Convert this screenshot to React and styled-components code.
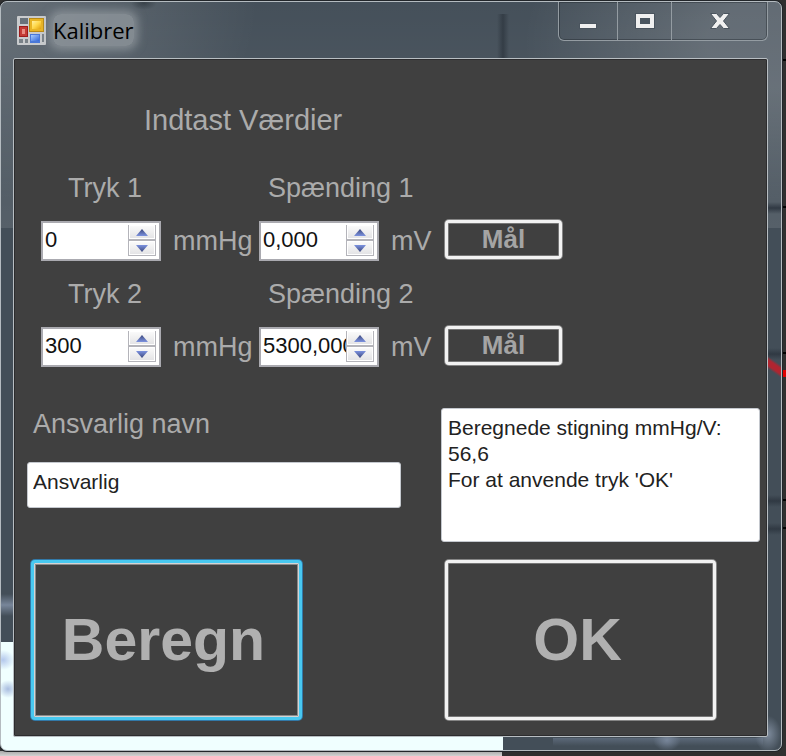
import React, { useState } from "react";
import styled, { createGlobalStyle, css } from "styled-components";

const GlobalStyle = createGlobalStyle`
  * { box-sizing: border-box; }
  body {
    margin: 0;
    min-height: 100vh;
    font-family: "Liberation Sans", Arial, sans-serif;
    background:
      linear-gradient(#a8a8a8, #d2d2d2) 0 751px / 502px 5px no-repeat,
      linear-gradient(#e00000, #e00000) 100% 370px / 4px 7px no-repeat,
      linear-gradient(#000, #000) 100% 59px / 5px 2px no-repeat,
      linear-gradient(#000, #000) 100% 206px / 5px 2px no-repeat,
      linear-gradient(#000, #000) 100% 352px / 5px 2px no-repeat,
      linear-gradient(#000, #000) 100% 499px / 5px 2px no-repeat,
      linear-gradient(#000, #000) 100% 527px / 5px 2px no-repeat,
      #303030;
  }
  button, input, textarea { font-family: inherit; }
`;

const shade = (y) =>
  `linear-gradient(transparent, #303943, transparent) 100% ${y}px / 13px 12px no-repeat`;

const GlassWindow = styled.div`
  margin: 1px 4px 0 0;
  padding: 0 13px 13px 12px;
  border: 1px solid #b4bbc0;
  border-radius: 7px;
  box-shadow: 0 0 0 1px #22262a;
  background:
    linear-gradient(transparent, #78869a, transparent) -4px 592px / 17px 22px no-repeat,
    radial-gradient(ellipse at center, #b4c8ec 0%, transparent 70%) -10px 648px / 24px 20px no-repeat,
    radial-gradient(ellipse at center, #a9bde0 0%, transparent 70%) -3px 678px / 20px 18px no-repeat,
    linear-gradient(215deg, transparent 32%, #b02530 42%, #b02530 58%, transparent 68%) 100% 352px / 13px 26px no-repeat,
    ${shade(200)}, ${shade(346)}, ${shade(493)}, ${shade(521)},
    radial-gradient(ellipse at center, #7e8b9c 0%, transparent 72%) 100% 714px / 26px 36px no-repeat,
    radial-gradient(ellipse at center, #78869a 0%, transparent 70%) 652px 727px / 28px 22px no-repeat,
    linear-gradient(#5c6979, transparent) 552px 736px / 210px 8px no-repeat,
    linear-gradient(#f0ffff, #f0ffff) 0 640px / 502px 110px no-repeat,
    linear-gradient(90deg, transparent, #343d46, transparent) 496px 12px / 12px 46px no-repeat,
    radial-gradient(ellipse at center, #39424a 0%, transparent 70%) 130px -6px / 26px 14px no-repeat,
    linear-gradient(rgba(255,255,255,.01), rgba(255,255,255,.1)) 0 0 / 100% 226px no-repeat,
    radial-gradient(ellipse at 0 0, rgba(255,255,255,.18), transparent 70%) 0 0 / 260px 200px no-repeat,
    radial-gradient(ellipse at 100% 20%, rgba(255,255,255,.16) 20%, transparent 70%) 100% 0 / 260px 200px no-repeat,
    #434e58;
`;

const TitleBar = styled.header`
  display: flex;
  justify-content: space-between;
  align-items: flex-start;
  height: 56px;
`;

const Title = styled.div`
  display: flex;
  align-items: center;
  gap: 7px;
  padding: 12px 0 0 4px;
`;

const TitleText = styled.h1`
  margin: 0;
  color: #000;
  font: 400 22px/32px "Open Sans", "Noto Sans", sans-serif;
  background: rgba(150, 156, 163, .7);
  box-shadow: 0 0 8px 4px rgba(150, 156, 163, .7);
  border-radius: 8px;
`;

const CaptionButtons = styled.div`
  display: flex;
  height: 39px;
  border: 1px solid #949ca2;
  border-top: 0;
  border-radius: 0 0 6px 6px;
  box-shadow: inset 0 0 0 1px rgba(20, 26, 32, .35);
`;

const captionWidths = { min: "58px", max: "54px", close: "96px" };

const CaptionButton = styled.button`
  display: grid;
  place-items: center;
  width: ${({ $kind }) => captionWidths[$kind]};
  padding: 0;
  border: 0;
  border-left: ${({ $kind }) => ($kind === "min" ? "0" : "1px solid #949ca2")};
  background: transparent;
`;

const Form = styled.main`
  padding: 41px 7px 16px 13px;
  border: 1px solid #b8bec2;
  border-radius: 2px;
  background: #404040;
  box-shadow: inset 0 0 0 1px #2c2c2e;
  color: #ababab;
`;

const Heading = styled.h2`
  margin: 0 0 32px 117px;
  font-size: 29px;
  font-weight: 400;
  line-height: 40px;
`;

const Readings = styled.div`
  display: grid;
  grid-template-columns: 218px 184px 119px;
  margin: 0 0 0 14px;
`;

const Label = styled.label`
  font-size: 27px;
  line-height: 32px;
  white-space: nowrap;
`;

const PressureLabel = styled(Label)`
  padding: 0 0 0 27px;
`;

const VoltageLabel = styled(Label)`
  grid-column: span 2;
  padding: 0 0 0 9px;
`;

const Reading = styled.div`
  display: flex;
  align-items: center;
  gap: 12px;
  height: 40px;
  margin: 17px 0;
`;

const Unit = styled.span`
  font-size: 27px;
  line-height: 32px;
`;

const NumberBox = styled.div`
  display: flex;
  width: 120px;
  height: 40px;
  padding: 2px 3px 3px 2px;
  border: 2px solid #aaaab0;
  background: #fff;
`;

const NumberInput = styled.input`
  flex: 1;
  min-width: 0;
  height: 30px;
  padding: 0;
  border: 0;
  outline: 0;
  background: transparent;
  color: #111;
  font-size: 22px;
`;

const Spinner = styled.div`
  display: grid;
  grid-template-rows: 1fr 1fr;
  gap: 2px;
  width: 28px;
  border: 1px solid #b4b4ba;
  border-top: 0;
  background: #b4b4ba;
`;

const SpinButton = styled.button`
  display: grid;
  place-items: center;
  padding: 0;
  border: 1px solid #fff;
  background: linear-gradient(#fafafa, #e4e4e6);
`;

const frameLight = css`
  border: 3px solid #f2f2f2;
  box-shadow: 0 0 0 1px #858585, inset 0 0 0 1px #777;
`;

const frameFocus = css`
  border: 3px solid #48c8f0;
  box-shadow: 0 0 0 1px #3279a8, inset 0 0 0 1px #d4d4d4, inset 0 0 0 2px #8a8a8a;
`;

const PushButton = styled.button`
  padding: 0;
  border-radius: 4px;
  background: #404040;
  color: #b0b0b0;
  font-weight: 700;
  ${({ $default }) => ($default ? frameFocus : frameLight)}
`;

const MeasureButton = styled(PushButton)`
  align-self: center;
  height: 39px;
  margin: -4px 0 0 2px;
  color: #a4a4a4;
  font-size: 26px;
  line-height: 30px;
`;

const ActionButton = styled(PushButton)`
  width: 271px;
  max-width: 100%;
  height: 160px;
  margin: 0 0 0 4px;
  padding: 0 6px 0 0;
  font-size: 59px;
`;

const Lower = styled.div`
  display: grid;
  grid-template-columns: 374fr 319fr;
  gap: 18px 40px;
  margin: 24px 0 0;
`;

const NameField = styled.div`
  display: flex;
  flex-direction: column;
  gap: 22px;
`;

const NameLabel = styled(Label)`
  padding: 0 0 0 6px;
`;

const NameInput = styled.input`
  width: 100%;
  height: 46px;
  padding: 0 6px 6px 5px;
  border: 1px solid #c4c8ce;
  border-radius: 3px;
  outline: 0;
  background: #fff;
  color: #222;
  font-size: 21px;
`;

const Result = styled.textarea`
  display: block;
  width: 100%;
  height: 134px;
  padding: 6px;
  border: 1px solid #c4c8ce;
  border-radius: 3px;
  outline: 0;
  resize: none;
  overflow: hidden;
  background: #fff;
  color: #222;
  font-size: 21px;
  line-height: 26px;
`;

function AppIcon() {
  return (
    <svg width="29" height="29" viewBox="0 0 29 29" aria-hidden="true">
      <defs>
        <linearGradient id="yellow" x1="0" y1="0" x2="1" y2="1">
          <stop offset="0" stopColor="#fff0a0" />
          <stop offset=".5" stopColor="#ffd84a" />
          <stop offset="1" stopColor="#e0a010" />
        </linearGradient>
        <linearGradient id="blue" x1="0" y1="0" x2="1" y2="1">
          <stop offset="0" stopColor="#a8ccff" />
          <stop offset="1" stopColor="#3468d8" />
        </linearGradient>
      </defs>
      <rect width="29" height="29" rx="1" fill="#c9cbcd" />
      <rect x="3" y="2" width="8" height="6" fill="#68727a" />
      <rect x="12" y="2" width="15" height="14" fill="#b98a14" />
      <rect x="13" y="3" width="13" height="12" fill="#e8b424" />
      <rect x="15" y="5" width="9" height="8" fill="url(#yellow)" />
      <rect x="2" y="10" width="9" height="11" fill="#9c1c1c" />
      <rect x="3" y="11" width="7" height="9" fill="#c43a34" />
      <rect x="5" y="13" width="3" height="5" fill="#e88a80" />
      <rect x="13" y="18" width="10" height="9" fill="#4a78d8" />
      <rect x="14" y="19" width="8" height="6" fill="url(#blue)" />
      <rect x="2" y="23" width="4" height="4" fill="#7a8288" />
      <rect x="8" y="23" width="3" height="4" fill="#7a8288" />
      <rect x="25" y="18" width="2" height="8" fill="#7a8288" />
    </svg>
  );
}

function CaptionIcon({ kind }) {
  return (
    <svg width="20" height="18" viewBox="0 0 20 18" aria-hidden="true">
      <g fill="#f0f0f0" stroke="#4a545e" strokeWidth="1" fillRule="evenodd">
        {kind === "min" && <rect x="1.5" y="11.5" width="17" height="5" />}
        {kind === "max" && (
          <>
            <rect x=".5" y="1.5" width="19" height="15" />
            <rect x="5" y="6" width="10" height="6" fill="#4a555f" stroke="none" />
          </>
        )}
        {kind === "close" && (
          <path d="M.5 1.500h6l3.500 4 3.500-4h6L13.500 9l6 7.500h-6l-3.500-4-3.500 4h-6L6.500 9z" />
        )}
      </g>
    </svg>
  );
}

function Arrow({ down }) {
  return (
    <svg width="12" height="7" viewBox="0 0 12 7" aria-hidden="true">
      <defs>
        <linearGradient id="arrowUp" x1="0" y1="0" x2="0" y2="1">
          <stop offset="0" stopColor="#3c487c" />
          <stop offset="1" stopColor="#7c92e0" />
        </linearGradient>
        <linearGradient id="arrowDown" x1="0" y1="0" x2="0" y2="1">
          <stop offset="0" stopColor="#7c92e0" />
          <stop offset="1" stopColor="#3c487c" />
        </linearGradient>
      </defs>
      <path d={down ? "M0 0h12L6 7z" : "M6 0l6 7H0z"} fill={down ? "url(#arrowDown)" : "url(#arrowUp)"} />
    </svg>
  );
}

function NumericField({ id, initial, unit }) {
  const [value, setValue] = useState(initial);
  const decimals = (initial.split(",")[1] || "").length;
  const step = (by) =>
    setValue((v) => (parseFloat(v.replace(",", ".")) + by).toFixed(decimals).replace(".", ","));
  return (
    <Reading>
      <NumberBox>
        <NumberInput id={id} value={value} onChange={(e) => setValue(e.target.value)} />
        <Spinner>
          <SpinButton type="button" aria-label="Op" onClick={() => step(1)}><Arrow /></SpinButton>
          <SpinButton type="button" aria-label="Ned" onClick={() => step(-1)}><Arrow down /></SpinButton>
        </Spinner>
      </NumberBox>
      <Unit>{unit}</Unit>
    </Reading>
  );
}

const rows = [
  { n: 1, pressure: "0", voltage: "0,000" },
  { n: 2, pressure: "300", voltage: "5300,000" },
];

export default function App() {
  const [name, setName] = useState("Ansvarlig");
  return (
    <>
      <GlobalStyle />
      <GlassWindow>
        <TitleBar>
          <Title>
            <AppIcon />
            <TitleText>Kalibrer</TitleText>
          </Title>
          <CaptionButtons>
            <CaptionButton $kind="min" aria-label="Minimer"><CaptionIcon kind="min" /></CaptionButton>
            <CaptionButton $kind="max" aria-label="Maksimer"><CaptionIcon kind="max" /></CaptionButton>
            <CaptionButton $kind="close" aria-label="Luk"><CaptionIcon kind="close" /></CaptionButton>
          </CaptionButtons>
        </TitleBar>
        <Form>
          <Heading>Indtast Værdier</Heading>
          <Readings>
            {rows.map(({ n, pressure, voltage }) => (
              <React.Fragment key={n}>
                <PressureLabel htmlFor={`tryk${n}`}>Tryk {n}</PressureLabel>
                <VoltageLabel htmlFor={`spaending${n}`}>Spænding {n}</VoltageLabel>
                <NumericField id={`tryk${n}`} initial={pressure} unit="mmHg" />
                <NumericField id={`spaending${n}`} initial={voltage} unit="mV" />
                <MeasureButton type="button">Mål</MeasureButton>
              </React.Fragment>
            ))}
          </Readings>
          <Lower>
            <NameField>
              <NameLabel htmlFor="navn">Ansvarlig navn</NameLabel>
              <NameInput id="navn" value={name} onChange={(e) => setName(e.target.value)} />
            </NameField>
            <Result
              readOnly
              aria-label="Resultat"
              value={"Beregnede stigning mmHg/V:\n56,6\nFor at anvende tryk 'OK'"}
            />
            <ActionButton type="button" $default>Beregn</ActionButton>
            <ActionButton type="button">OK</ActionButton>
          </Lower>
        </Form>
      </GlassWindow>
    </>
  );
}
